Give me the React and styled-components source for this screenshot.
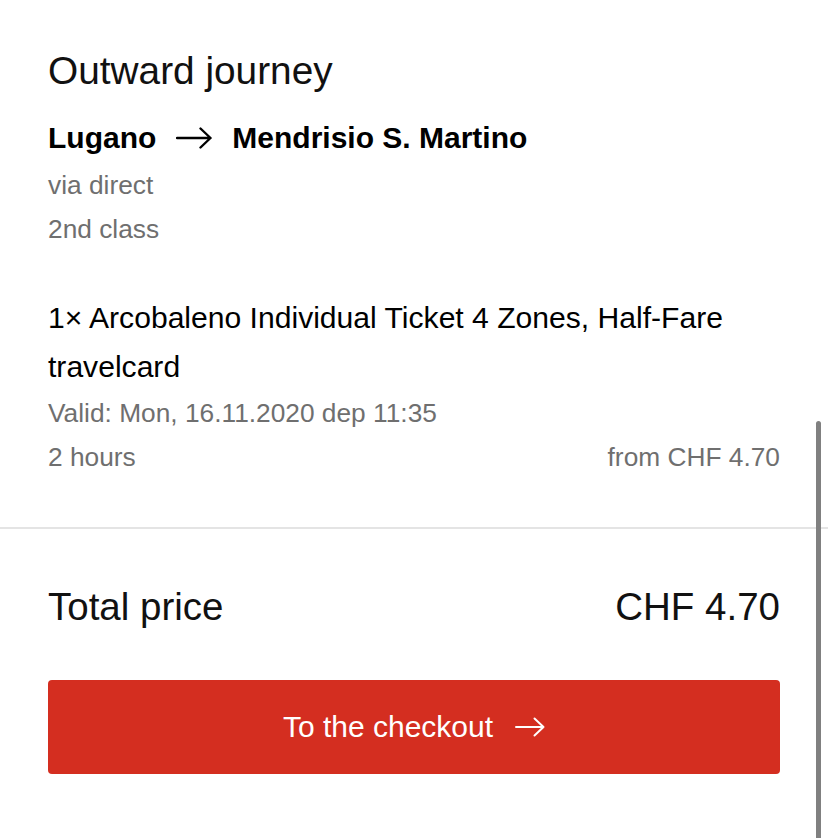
import React from "react";
import styled, { createGlobalStyle } from "styled-components";

const Global = createGlobalStyle`
  html, body { margin: 0; padding: 0; background: #fff; }
  body { font-family: "Liberation Sans", Arial, Helvetica, sans-serif; color: #000; }
  * { box-sizing: border-box; }
`;

const Page = styled.div`
  width: 828px;
  min-height: 838px;
  position: relative;
  overflow: hidden;
`;

const Section = styled.section`
  padding: ${(p) => p.$pad};
  display: flex;
  flex-direction: column;
`;

const Heading = styled.h2`
  margin: 0;
  font-size: 38.8px;
  line-height: 46px;
  font-weight: 400;
  color: #111;
`;

const Route = styled.div`
  margin-top: 26px;
  display: flex;
  align-items: center;
  gap: 20px;
  font-size: 30px;
  line-height: 36px;
  font-weight: 700;
`;

const Meta = styled.div`
  font-size: 26.3px;
  line-height: 44px;
  color: #6f6f6f;
`;

const MetaGroup = styled.div`
  margin-top: ${(p) => p.$mt || 0}px;
  display: flex;
  flex-direction: column;
`;

const TicketTitle = styled.div`
  margin-top: 42px;
  font-size: 30.1px;
  line-height: 49px;
  color: #000;
`;

const SplitRow = styled.div`
  display: flex;
  justify-content: space-between;
  align-items: baseline;
`;

const Divider = styled.hr`
  margin: 0;
  border: 0;
  border-top: 2px solid #e4e4e4;
`;

const TotalRow = styled.div`
  margin-top: 55px;
  display: flex;
  justify-content: space-between;
  align-items: baseline;
  font-size: 38.5px;
  line-height: 46px;
  color: #111;
`;

const Button = styled.button`
  margin-top: 50px;
  width: 100%;
  height: 94px;
  border: 0;
  border-radius: 4px;
  background: #d42e20;
  color: #fff;
  font-family: inherit;
  font-size: 30px;
  display: flex;
  align-items: center;
  justify-content: center;
  gap: 22px;
  cursor: pointer;
`;

const Scrollbar = styled.div`
  position: absolute;
  right: 7px;
  top: 421px;
  bottom: 0;
  width: 5px;
  border-radius: 3px 3px 0 0;
  background: #808080;
`;

const Arrow = ({ w, h, color, sw }) => (
  <svg width={w} height={h} viewBox={`0 0 ${w} ${h}`} fill="none">
    <path
      d={`M1 ${h / 2} H${w - 1.5} M${w - 1.5 - h / 2 + 1} ${1.5} L${w - 1.5} ${h / 2} L${w - 1.5 - h / 2 + 1} ${h - 1.5}`}
      stroke={color}
      strokeWidth={sw}
      strokeLinecap="round"
      strokeLinejoin="round"
    />
  </svg>
);

export default function App() {
  return (
    <Page>
      <Global />
      <Section $pad="48px 48px 48px">
        <Heading>Outward journey</Heading>
        <Route>
          <span>Lugano</span>
          <Arrow w={36} h={22} color="#000" sw={2.4} />
          <span>Mendrisio S. Martino</span>
        </Route>
        <MetaGroup $mt={7}>
          <Meta>via direct</Meta>
          <Meta>2nd class</Meta>
        </MetaGroup>
        <TicketTitle>1× Arcobaleno Individual Ticket 4 Zones, Half-Fare travelcard</TicketTitle>
        <MetaGroup>
          <Meta>Valid: Mon, 16.11.2020 dep 11:35</Meta>
          <SplitRow>
            <Meta>2 hours</Meta>
            <Meta>from CHF 4.70</Meta>
          </SplitRow>
        </MetaGroup>
      </Section>
      <Divider />
      <Section $pad="0 48px 60px">
        <TotalRow>
          <span>Total price</span>
          <span>CHF 4.70</span>
        </TotalRow>
        <Button>
          <span>To the checkout</span>
          <Arrow w={30} h={20} color="#fff" sw={2} />
        </Button>
      </Section>
      <Scrollbar />
    </Page>
  );
}
